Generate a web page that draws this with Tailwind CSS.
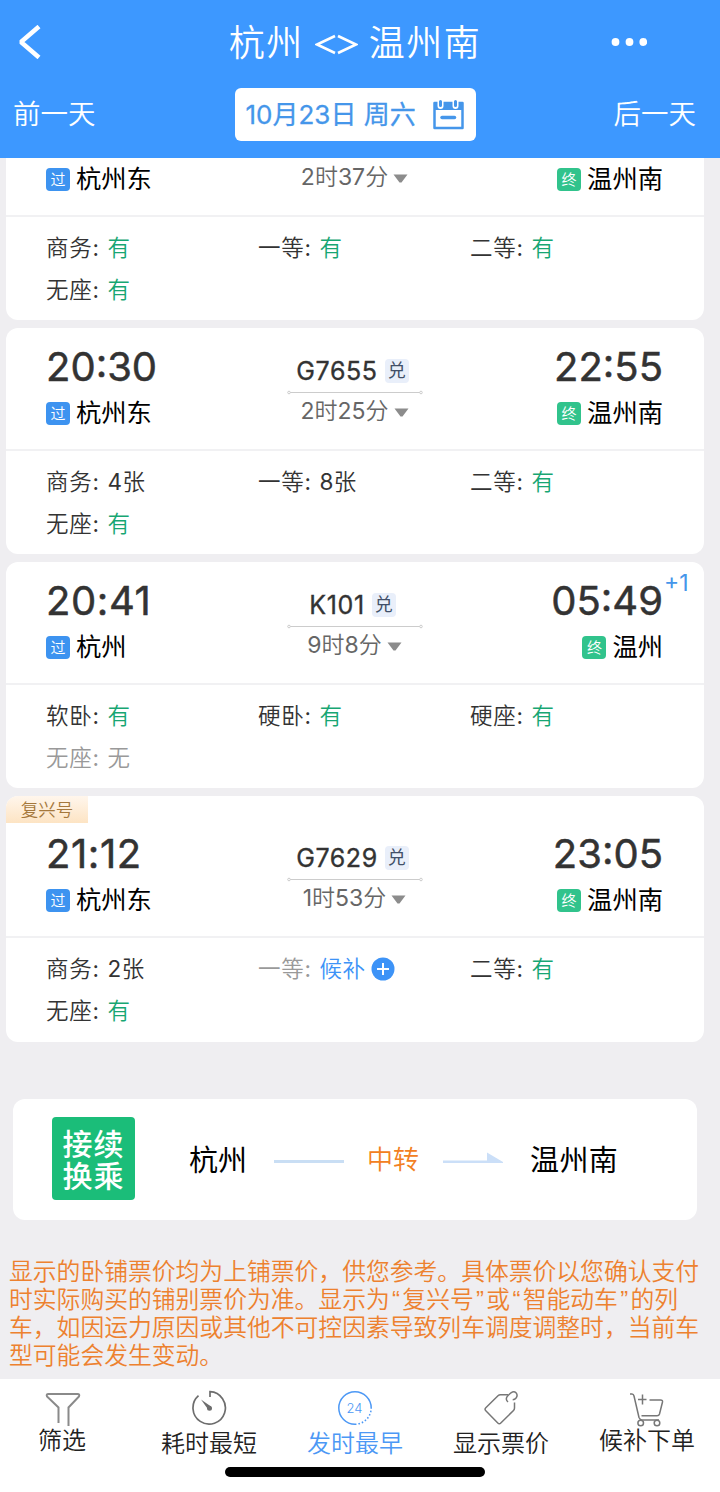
<!DOCTYPE html>
<html lang="zh-CN">
<head>
<meta charset="utf-8">
<title>杭州 - 温州南</title>
<script src="https://cdn.jsdelivr.net/npm/@tailwindcss/browser@4"></script>
</head>
<body class="flex h-[1492px] w-[720px] flex-col overflow-hidden bg-[#efeef1] font-[Inter,'Noto_Sans_CJK_SC',sans-serif] font-[350] text-[#333]">

<header class="h-[158px] shrink-0 bg-[#3d98ff] text-white">
  <div class="grid h-[84px] grid-cols-[180px_1fr_180px] items-center">
    <svg class="ml-[17px] block h-[34px] w-6" viewBox="0 0 24 34" fill="none" stroke="#fff" stroke-width="4.500"><path d="M22 1.500 4 17l18 15.500" stroke-linejoin="bevel"/></svg>
    <h1 class="flex items-center justify-center pt-0.5 pr-2.5 text-[36px] leading-none tracking-[1.5px] whitespace-nowrap"><span>杭州</span>
      <svg class="mx-[11px] mt-1 block h-6 w-[43px]" viewBox="0 0 43 24" fill="none" stroke="#fff" stroke-width="2.600"><path d="M20 3 2 11.500l18 8.500M23 3l18 8.500L23 20"/></svg>
      <span>温州南</span></h1>
    <svg class="ml-[71px] block h-2.5 w-9" viewBox="0 0 36 10" fill="#fff"><circle cx="4.500" cy="5" r="3.900"/><circle cx="18.500" cy="5" r="3.900"/><circle cx="32.300" cy="5" r="3.900"/></svg>
  </div>
  <div class="flex h-[61px] items-center justify-between pr-6 pl-[13px] text-[27.500px] leading-none">
    <span class="pt-px">前一天</span>
    <div class="ml-px flex h-[53px] w-[241px] items-center justify-between rounded-md bg-white pr-[12px] pl-[11px] text-[#4596ea]">
      <span class="text-[26px] font-normal whitespace-nowrap [-webkit-text-stroke:0.3px]">10月23日 周六</span>
      <svg class="block h-[30px] w-[31px]" viewBox="0 0 31 30"><path d="M1.500 3h28v25h-28z" fill="#fff" stroke="#4596ea" stroke-width="2.500" stroke-linejoin="round"/><path d="M1 2h29v8H1z" fill="#4596ea"/><path d="M7.500 0v6M22.500 0v6" stroke="#fff" stroke-width="6" stroke-linecap="round"/><path d="M7.500 1.500v4M22.500 1.500v4" stroke="#4596ea" stroke-width="3" stroke-linecap="round"/><path d="M9 17.500h12.500" stroke="#4596ea" stroke-width="3.500" stroke-linecap="round"/></svg>
    </div>
    <span class="pt-px">后一天</span>
  </div>
</header>

<main class="flex h-[1221px] shrink-0 flex-col">
  <div id="trains" class="ml-1.5 flex w-[698px] flex-col gap-2"></div>

  <section class="mt-[57px] ml-[13px] flex h-[121px] w-[684px] shrink-0 items-center rounded-xl bg-white text-[29px] leading-none text-black">
    <div class="mb-[2px] ml-[39px] flex h-[83px] w-[83px] flex-col items-center justify-center rounded bg-[#1bbd79] pt-0.5 text-[30px] leading-[32px] font-medium text-white"><span class="tracking-[1px]">接续</span><span class="tracking-[1px]">换乘</span></div>
    <span class="mt-0.5 ml-[54px] w-[85px] font-normal">杭州</span>
    <span class="mt-1 h-[3px] w-[70px] bg-[#c9def4]"></span>
    <span class="ml-[23px] w-[76px] text-[26px] text-[#f28022]">中转</span>
    <svg class="block h-4 w-[61px]" viewBox="0 0 61 16" fill="#cbdff8"><path d="M0 8.500h44V.500l16 9.500v1H0z"/></svg>
    <span class="mt-0.5 ml-[26px] font-normal tracking-[0.4px]">温州南</span>
  </section>

  <p class="mt-[38px] flex flex-col pl-[9px] text-[23.800px] leading-[28px] whitespace-nowrap text-[#ed812f]">
    <span class="h-7">显示的卧铺票价均为上铺票价，供您参考。具体票价以您确认支付</span>
    <span class="flex h-7">时实际购买的铺别票价为准。显示为<span class="w-[12.600px] text-center font-['Liberation_Sans']">“</span>复兴号<span class="w-[12.600px] text-center font-['Liberation_Sans']">”</span>或<span class="w-[12.600px] text-center font-['Liberation_Sans']">“</span>智能动车<span class="w-[12.600px] text-center font-['Liberation_Sans']">”</span>的列</span>
    <span class="h-7">车，如因运力原因或其他不可控因素导致列车调度调整时，当前车</span>
    <span class="h-7">型可能会发生变动。</span>
  </p>
</main>

<nav class="relative h-[113px] shrink-0 bg-white">
  <div class="-ml-[10px] grid w-[730px] grid-cols-5 text-center text-[24px] leading-none text-[#222]">
    <div class="flex flex-col items-center pt-[13px]">
      <svg class="block h-[35px] w-9" viewBox="0 0 36 35" fill="none" stroke="#8a8a8a" stroke-width="2"><path d="M13.500 31V15.500L2 4.500Q1 2 3.500 2h29q2.500 0 1.500 2.500L23.500 15.500V34"/></svg>
      <span class="mt-0.5 -ml-0.5">筛选</span>
    </div>
    <div class="flex flex-col items-center pt-[11px]">
      <svg class="block h-9 w-9" viewBox="0 0 36 36" fill="none" stroke="#6d6d6d" stroke-width="1.700"><path d="M19 7V1.700A16.200 16.200 0 1 1 7.500 5.700"/><path d="M10 9.500 20 16.500 17.500 20z" fill="#6d6d6d" stroke="none"/><circle cx="18.500" cy="18.300" r="2.500" fill="#6d6d6d" stroke="none"/></svg>
      <span class="mt-[6px]">耗时最短</span>
    </div>
    <div class="flex flex-col items-center pt-[11px] text-[#4c98f5]">
      <svg class="block h-9 w-9" viewBox="0 0 36 36" fill="none" stroke="#4c98f5" stroke-width="1.500"><path d="M34.200 18A16.200 16.200 0 1 0 18 34.200"/><path d="M18 34.200A16.200 16.200 0 0 0 34.200 18" stroke-dasharray="1.500 2"/><text x="17.500" y="22.700" text-anchor="middle" fill="#4c98f5" stroke="none" class="text-[13px]">24</text></svg>
      <span class="mt-[6px]">发时最早</span>
    </div>
    <div class="flex flex-col items-center pt-[11px]">
      <svg class="block h-9 w-9" viewBox="0 0 36 36" fill="none" stroke="#777" stroke-width="1.500"><path d="M25 4.700h-7.500q-1.500 0-2.500 1L2.800 17.800q-1.500 1.500 0 3l12 12.200q1.500 1.500 3 0L30.500 20.500q1-1 1-2.500V12.500"/><path d="M25 12q-3.500-3 .300-6.700l2.700-2.500q3-2 5 0t.300 4.900q-1.500 2-3.600 2.100"/></svg>
      <span class="mt-[6px]">显示票价</span>
    </div>
    <div class="flex flex-col items-center pt-[13px]">
      <svg class="block h-[35px] w-9" viewBox="0 0 36 35" fill="none" stroke="#777" stroke-width="1.500"><path d="M1 2h2q1.500 0 2 2l5 21.500q1 2.500 3 2.500h17M20.500 8h11q2.500 0 2 2l-3 12q-.500 1.800-2.500 1.800H12.500M13.500 2.500v10M9 7.500h8.500"/><circle cx="11.700" cy="31" r="2.800"/><circle cx="28" cy="31" r="2.800"/></svg>
      <span class="mt-0.5">候补下单</span>
    </div>
  </div>
  <div class="absolute top-[88px] left-[225px] h-[10px] w-[260px] rounded-full bg-black"></div>
</nav>

<script>
const trains = [
  { scrolled: true, from: '杭州东', to: '温州南', dur: '2时37分', seats: [['商务','有'],['一等','有'],['二等','有'],['无座','有']] },
  { dep: '20:30', arr: '22:55', no: 'G7655', from: '杭州东', to: '温州南', dur: '2时25分', seats: [['商务','4张'],['一等','8张'],['二等','有'],['无座','有']] },
  { dep: '20:41', arr: '05:49', no: 'K101', from: '杭州', to: '温州', dur: '9时8分', next: true, seats: [['软卧','有'],['硬卧','有'],['硬座','有'],['无座','无']] },
  { dep: '21:12', arr: '23:05', no: 'G7629', from: '杭州东', to: '温州南', dur: '1时53分', tag: '复兴号', seats: [['商务','2张'],['一等','候补'],['二等','有'],['无座','有']] }
];
const plus = '<svg class="ml-1.5 block h-6 w-6" viewBox="0 0 24 24"><circle cx="12" cy="12" r="11.500" fill="#3d93f7"/><path d="M12 6v12M6 12h12" stroke="#fff" stroke-width="2"/></svg>';
const digits = s => s.replace(/\d+/g, '<span class="font-normal">$&</span>');
const seat = ([k, v]) => {
  const color = { '有': 'text-[#17a673]', '候补': 'text-[#3d93f7]', '无': 'text-[#999]' }[v] || 'text-[#333]';
  const label = v === '无' || v === '候补' ? 'text-[#999]' : 'text-[#333]';
  return `<div class="flex items-center"><span class="w-[61.500px] tracking-[0.8px] ${label}">${k}<span class="font-normal">:</span></span><span class="tracking-[0.4px] ${color}">${digits(v)}</span>${v === '候补' ? plus : ''}</div>`;
};
const stop = (kind, name) => `<div class="flex h-6 items-center gap-1.5"><span class="flex h-[23px] w-6 items-center justify-center rounded text-[15px] text-white ${kind === '过' ? 'bg-[#3d93f0]' : 'bg-[#31c38c]'}">${kind}</span><span class="text-[25.300px] font-normal text-black">${name}</span></div>`;
const time = v => `<span class="h-[54px] text-[40px] leading-[39px] font-normal [-webkit-text-stroke:0.5px] ${/1/.test(v) ? 'tracking-[0.6px]' : 'tracking-[0px]'}">${v}</span>`;
const number = no => `<div class="flex h-6 items-center gap-[7px] pr-1"><span class="text-[25px] font-normal tracking-[0.6px] [-webkit-text-stroke:0.35px]">${no}</span><span class="flex h-6 w-6 items-center justify-center rounded bg-[#e9effa] text-[18px] font-normal text-[#414f68]">兑</span></div>
        <svg class="mt-[7px] mb-1 block h-[5px] w-[136px]" viewBox="0 0 136 5" fill="none" stroke="#ccc" stroke-width="1"><path d="M3 2.500h130"/><circle cx="2" cy="2.500" r="1.300" fill="#fff"/><circle cx="134" cy="2.500" r="1.300" fill="#fff"/></svg>`;
document.getElementById('trains').innerHTML = trains.map(t => `
  <article class="relative shrink-0 bg-white leading-none ${t.scrolled ? 'h-[162px] rounded-b-xl' : t.tag ? 'h-[246px] rounded-xl pt-[19px]' : 'h-[226px] rounded-xl'}">
    ${t.tag ? `<span class="absolute top-0 left-0 flex h-[27px] w-[82px] items-center justify-center rounded-tl-xl bg-linear-to-b from-[#fff6ec] to-[#fde4c4] text-[17.500px] text-[#a5783c]">${t.tag}</span>` : ''}
    <div class="grid grid-cols-[1fr_136px_1fr] pr-[41px] pl-10 ${t.scrolled ? 'h-[57px]' : 'h-[121px]'}">
      <div class="flex flex-col items-start ${t.scrolled ? 'pt-[9px]' : 'pt-[19px]'}">${t.scrolled ? '' : time(t.dep)}${stop('过', t.from)}</div>
      <div class="flex flex-col items-center ${t.scrolled ? 'pt-[7px]' : 'pt-[31px]'}">
        ${t.scrolled ? '' : number(t.no)}
        <div class="flex h-6 items-center gap-[5px] text-[23px] text-[#666]"><span>${digits(t.dur)}</span><svg class="mt-[3px] block h-[9px] w-[15px]" viewBox="0 0 15 9" fill="#8c8c8c"><path d="M.500.500h14l-6 8h-2z"/></svg></div>
      </div>
      <div class="flex flex-col items-end ${t.scrolled ? 'pt-[9px]' : 'pt-[19px]'}">${t.scrolled ? '' : time(t.arr)}${stop('终', t.to)}</div>
    </div>
    ${t.next ? '<span class="absolute top-[10px] left-[658px] text-[23px] font-normal text-[#4596ea]">+1</span>' : ''}
    <div class="h-0.5 bg-[#f1f1f3]"></div>
    <div class="grid auto-rows-[42px] grid-cols-[212px_212px_1fr] pt-[10px] pl-10 text-[22.500px]">${t.seats.map(seat).join('')}</div>
  </article>`).join('');
</script>
</body>
</html>
